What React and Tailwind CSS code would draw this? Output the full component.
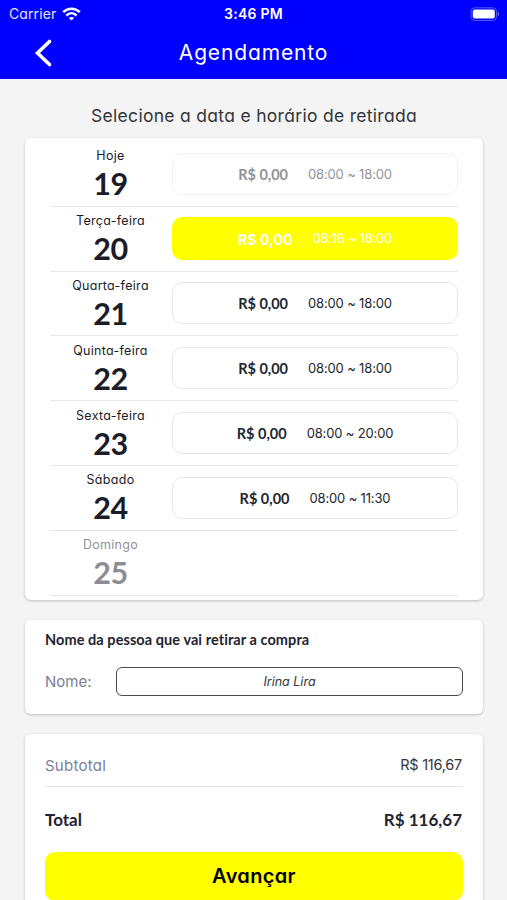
import React, { useState } from "react";

const days = [
  { label: "Hoje", day: 19, price: "R$ 0,00", hours: "08:00 ~ 18:00", past: true },
  { label: "Terça-feira", day: 20, price: "R$ 0,00", hours: "08:16 ~ 18:00" },
  { label: "Quarta-feira", day: 21, price: "R$ 0,00", hours: "08:00 ~ 18:00" },
  { label: "Quinta-feira", day: 22, price: "R$ 0,00", hours: "08:00 ~ 18:00" },
  { label: "Sexta-feira", day: 23, price: "R$ 0,00", hours: "08:00 ~ 20:00" },
  { label: "Sábado", day: 24, price: "R$ 0,00", hours: "08:00 ~ 11:30" },
  { label: "Domingo", day: 25, closed: true },
];

const StatusBar = () => (
  <div className="grid grid-cols-3 items-center h-[27px] pl-[9px] pr-[7px] text-[14px] leading-none text-white">
    <div className="flex items-center gap-[6px]">
      <span className="text-white/90 tracking-[0.1px]">Carrier</span>
      <svg width="19" height="14" viewBox="0 0 19 14" fill="none" stroke="white" strokeWidth="2.5">
        <path d="M1.2 5.2C6 .5 13 .5 17.8 5.2" />
        <path d="M4.4 8.5c3-2.9 7.2-2.9 10.2 0" />
        <path d="M9.5 13.5 6.9 10.9c1.5-1.3 3.7-1.3 5.2 0z" fill="white" stroke="none" />
      </svg>
    </div>
    <span className="pt-px pr-[2px] text-center text-[14px] font-semibold tracking-[0.25px] whitespace-nowrap">3:46 PM</span>
    <svg className="justify-self-end" width="30" height="14" viewBox="0 0 30 14">
      <rect x="1" y="0.8" width="25.5" height="12.6" rx="3.8" fill="none" stroke="white" strokeOpacity=".35" />
      <rect x="2.8" y="2.6" width="22" height="9" rx="2" fill="white" />
      <path d="M27.8 5v4c1.7-.7 1.7-3.3 0-4z" fill="white" fillOpacity=".5" />
    </svg>
  </div>
);

const DayRow = ({ item, selected, onSelect }) => {
  return (
    <div className="flex items-center h-[64.8px] border-b-[1.5px] border-[#e6e7e8]">
      <div
        className={`w-[122px] pr-px pt-px shrink-0 flex flex-col items-center text-[#1a1d28] ${
          item.closed ? "opacity-50" : ""
        }`}
      >
        <span className="text-[12.5px] leading-[18px] tracking-[0.3px]">{item.label}</span>
        <span className="font-[Lato,sans-serif] font-bold text-[30.5px] leading-[36px] tracking-[-0.4px]">
          {item.day}
        </span>
      </div>

      {!item.closed && (
        <button
          type="button"
          disabled={item.past}
          onClick={onSelect}
          className={`flex-1 flex items-center justify-center gap-5 pt-px rounded-[10px] whitespace-nowrap ${
            selected
              ? "h-[43px] bg-[#ffff00] text-white"
              : "h-[42px] border-[1.5px] border-[#e6e7e8] text-[#22262e]"
          } ${item.past ? "opacity-50" : ""}`}
        >
          <span
            className={
              selected
                ? "text-[14px] font-bold tracking-[0.1px]"
                : "font-[Lato,sans-serif] text-[14.5px] font-bold"
            }
          >
            {item.price}
          </span>
          <span className={`text-[13px] ${selected ? "tracking-[-0.25px]" : "tracking-[-0.15px]"}`}>
            {item.hours}
          </span>
        </button>
      )}
    </div>
  );
};

const App = () => {
  const [selectedDay, setSelectedDay] = useState(20);
  const [name, setName] = useState("Irina Lira");

  return (
    <div className="h-[900px] overflow-hidden bg-[#f4f4f4] font-[Inter,sans-serif] [font-feature-settings:'cv11']">
      <header className="h-[79px] bg-[#0000ff] text-white">
        <StatusBar />
        <div className="grid grid-cols-[80px_1fr_80px] items-center h-[51px]">
          <button type="button" aria-label="Voltar" className="pl-[34px]">
            <svg width="18" height="28" viewBox="0 0 18 28" fill="none" stroke="white" strokeWidth="3.6">
              <path d="M15.5 2.5 3.5 14l12 11.5" strokeLinecap="round" />
            </svg>
          </button>
          <h1 className="pt-px text-center text-[21px] tracking-[0.85px]">Agendamento</h1>
        </div>
      </header>

      <main className="pl-[25px] pr-[24px]">
        <h2 className="h-[59px] pt-[23px] text-center text-[17.5px] leading-[28px] tracking-[0.3px] text-[#33363b] whitespace-nowrap">
          Selecione a data e horário de retirada
        </h2>

        {/* Days */}
        <section className="h-[462px] bg-white rounded-md shadow-[0_1px_3px_rgba(0,0,0,0.22)] pt-[4px] pl-[25px] pr-[25px]">
          {days.map((item) => (
            <DayRow
              key={item.day}
              item={item}
              selected={item.day === selectedDay}
              onSelect={() => setSelectedDay(item.day)}
            />
          ))}
        </section>

        {/* Who picks up the order */}
        <section className="mt-5 h-[94px] bg-white rounded-md shadow-[0_1px_3px_rgba(0,0,0,0.22)] px-5 pt-[10px]">
          <h3 className="font-[Lato,sans-serif] font-bold text-[14.5px] leading-[20px] tracking-[0.07px] text-[#1f2430]">
            Nome da pessoa que vai retirar a compra
          </h3>
          <div className="flex items-center mt-[17px]">
            <label htmlFor="name" className="w-[71px] pt-px text-[15px] text-[#7b8096]">Nome:</label>
            <input
              id="name"
              value={name}
              onChange={(e) => setName(e.target.value)}
              className="flex-1 min-w-0 h-[29px] border-[1.5px] border-[#4a4b50] rounded-md text-center text-[12.5px] italic text-[#33363b] outline-none"
            />
          </div>
        </section>

        {/* Totals */}
        <section className="mt-5 h-[200px] bg-white rounded-md shadow-[0_1px_3px_rgba(0,0,0,0.22)] px-5 pt-[10px]">
          <div className="flex items-center justify-between h-[43px] pr-px border-b-[1.5px] border-[#e6e7e8]">
            <span className="pt-[2px] text-[15px] tracking-[0.25px] text-[#7b8096]">Subtotal</span>
            <span className="text-[14.5px] tracking-[-0.25px] text-[#33363b]">R$ 116,67</span>
          </div>
          <div className="flex items-center justify-between h-[65px] pt-px pr-px font-[Lato,sans-serif] font-bold text-[17px] text-[#1f2430]">
            <span>Total</span>
            <span>R$ 116,67</span>
          </div>
          <button type="button" className="w-full h-[49px] pb-[2px] rounded-[10px] bg-[#ffff00] text-[20px] tracking-[0.35px] font-semibold text-black">
            Avançar
          </button>
        </section>
      </main>
    </div>
  );
};

export default App;
